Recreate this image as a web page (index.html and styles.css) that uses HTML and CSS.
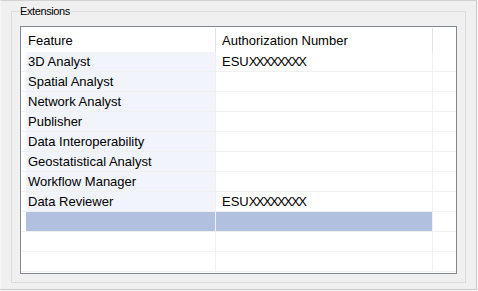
FILE: index.html
```html
<!DOCTYPE html>
<html lang="en">
  <head>
    <meta charset="UTF-8" />
    <title>Extensions</title>
    <link rel="stylesheet" href="styles.css">
  </head>
  <body>
    <div class="window">
      <div class="group">
        <span class="group-title">Extensions</span>
        <div class="grid">
          <div class="grid-head">
            <div class="head-cell first">Feature</div>
            <div class="head-cell">Authorization Number</div>
            <div class="head-fill"></div>
          </div>
          <div class="grid-row">
            <div class="row-head"></div>
            <div class="cell feature">3D Analyst</div>
            <div class="cell">ESU<span class="xs">XXXXXXXX</span></div>
            <div class="fill"></div>
          </div>
          <div class="grid-row">
            <div class="row-head"></div>
            <div class="cell feature">Spatial Analyst</div>
            <div class="cell"></div>
            <div class="fill"></div>
          </div>
          <div class="grid-row">
            <div class="row-head"></div>
            <div class="cell feature">Network Analyst</div>
            <div class="cell"></div>
            <div class="fill"></div>
          </div>
          <div class="grid-row">
            <div class="row-head"></div>
            <div class="cell feature">Publisher</div>
            <div class="cell"></div>
            <div class="fill"></div>
          </div>
          <div class="grid-row">
            <div class="row-head"></div>
            <div class="cell feature">Data Interoperability</div>
            <div class="cell"></div>
            <div class="fill"></div>
          </div>
          <div class="grid-row">
            <div class="row-head"></div>
            <div class="cell feature">Geostatistical Analyst</div>
            <div class="cell"></div>
            <div class="fill"></div>
          </div>
          <div class="grid-row">
            <div class="row-head"></div>
            <div class="cell feature">Workflow Manager</div>
            <div class="cell"></div>
            <div class="fill"></div>
          </div>
          <div class="grid-row">
            <div class="row-head"></div>
            <div class="cell feature">Data Reviewer</div>
            <div class="cell">ESU<span class="xs">XXXXXXXX</span></div>
            <div class="fill"></div>
          </div>
          <!-- new row placeholder -->
          <div class="grid-row new">
            <div class="row-head"></div>
            <div class="cell feature"></div>
            <div class="cell"></div>
            <div class="fill"></div>
          </div>
          <div class="grid-row empty">
            <div class="row-head"></div>
            <div class="cell"></div>
            <div class="cell"></div>
            <div class="fill"></div>
          </div>
          <div class="grid-row empty">
            <div class="row-head"></div>
            <div class="cell"></div>
            <div class="cell"></div>
            <div class="fill"></div>
          </div>
        </div>
      </div>
    </div>
  </body>
</html>
```

FILE: styles.css
```css
body {
  margin: 0;
  background-color: #f7f7f7;
  font-family: "Liberation Sans", Arial, sans-serif;
  color: #000;
}

.window {
  width: 477px;
  height: 290px;
  box-sizing: border-box;
  padding: 10px;
  background-color: #f0f0f0;
  border: 1px solid #c9c9c9;
  border-top-color: #d2d2d2;
  border-left-color: #f6f6f6;
}

.group {
  position: relative;
  height: 272px;
  box-sizing: border-box;
  padding: 14px 8px 8px 8px;
  border: 1px solid #dcdcdc;
}

.group-title {
  position: absolute;
  left: 7px;
  top: -7px;
  padding: 0 1px;
  background-color: #f0f0f0;
  font-size: 11px;
  line-height: 13px;
  letter-spacing: -0.4px;
}

.grid {
  height: 248px;
  box-sizing: border-box;
  background-color: #fff;
  border: 1px solid #828790;
  overflow: hidden;
  font-size: 13px;
}

.grid-head {
  display: grid;
  grid-template-columns: 195px 217px 24px;
  height: 25px;
}

.head-cell {
  border-right: 1px solid #e3e3e3;
  margin-top: 1px;
  padding: 5px 0 0 6px;
  line-height: 16px;
  white-space: nowrap;
}

.head-cell.first {
  padding-left: 7px;
}

.grid-row {
  display: grid;
  grid-template-columns: 5px 190px 217px 24px;
  height: 20px;
  box-sizing: border-box;
  border-bottom: 1px solid #f0f0f0;
}

.cell {
  border-right: 1px solid #f0f0f0;
  padding: 1px 0 0 6px;
  line-height: 18px;
  white-space: nowrap;
}

.cell.feature {
  background-color: #f1f4fa;
  padding-left: 2px;
}

.grid-row.new .cell {
  background-color: #b0c0de;
}

.xs {
  letter-spacing: -1.6px;
}
```
